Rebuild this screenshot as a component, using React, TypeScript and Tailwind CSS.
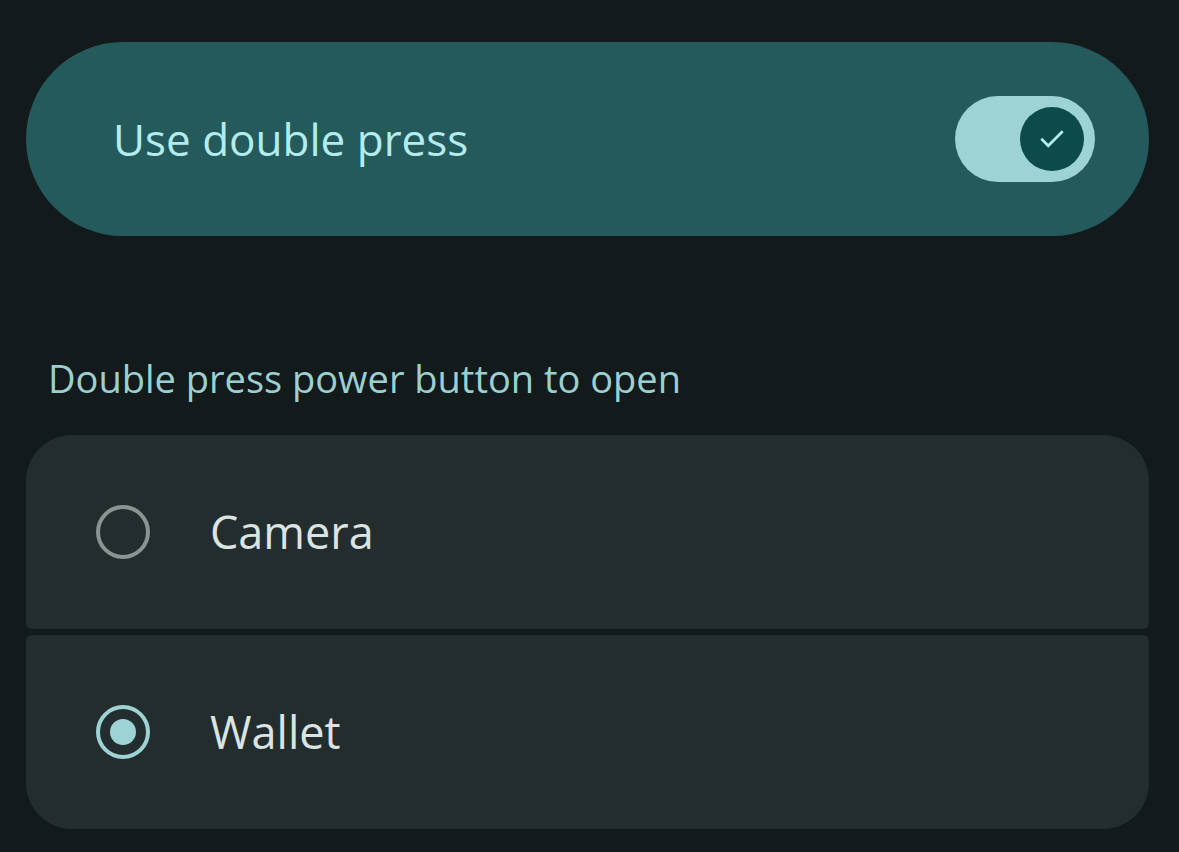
import { useState } from 'react';

type Option = { id: string; label: string };

const options: Option[] = [
  { id: 'camera', label: 'Camera' },
  { id: 'wallet', label: 'Wallet' },
];

function Radio({ checked }: { checked: boolean }) {
  return (
    <span
      className={`grid size-[54px] shrink-0 place-items-center rounded-full border-[4px] ${
        checked ? 'border-[#9dd3d5]' : 'border-[#8b9393]'
      }`}
    >
      {checked && <span className="size-[26px] rounded-full bg-[#9dd3d5]" />}
    </span>
  );
}

function Switch({ on, onToggle }: { on: boolean; onToggle: () => void }) {
  return (
    <button
      type="button"
      onClick={onToggle}
      aria-pressed={on}
      className={`flex h-[86px] w-[140px] items-center rounded-full px-[11px] ${
        on ? 'justify-end bg-[#9dd3d5]' : 'justify-start bg-[#3f4948]'
      }`}
    >
      <span className="grid size-[64px] place-items-center rounded-full bg-[#0d4a4b]">
        <svg width="36" height="36" viewBox="0 0 24 24" fill="none" aria-hidden="true">
          <path d="M5.5 12.5l4 4L18.5 7.5" stroke="#b6ecee" strokeWidth="1.8" strokeLinecap="square" />
        </svg>
      </span>
    </button>
  );
}

export default function App() {
  const [enabled, setEnabled] = useState(true);
  const [choice, setChoice] = useState('wallet');

  return (
    <div
      className="min-h-[852px] w-full bg-[#121a1b] pl-[26px] pr-[30px] pt-[42px]"
      style={{ fontFamily: '"Open Sans", "Noto Sans", sans-serif' }}
    >
      <div className="flex h-[194px] items-center justify-between rounded-full bg-[#245a5c] pl-[87px] pr-[54px]">
        <span className="text-[44px] text-[#b4eced]">Use double press</span>
        <Switch on={enabled} onToggle={() => setEnabled(!enabled)} />
      </div>

      <div className="mt-[116px] pl-[22px] text-[38px] leading-[52px] text-[#9dcfd0]">
        Double press power button to open
      </div>

      <div className="mt-[31px] flex flex-col gap-[6px]">
        {options.map((o, i) => (
          <button
            key={o.id}
            type="button"
            onClick={() => setChoice(o.id)}
            className={`flex h-[194px] items-center gap-[60px] bg-[#232d2d] pl-[70px] text-left ${
              i === 0 ? 'rounded-t-[46px] rounded-b-[6px]' : 'rounded-t-[6px] rounded-b-[46px]'
            }`}
          >
            <Radio checked={choice === o.id} />
            <span className="text-[45px] text-[#dce3e3]">{o.label}</span>
          </button>
        ))}
      </div>
    </div>
  );
}
